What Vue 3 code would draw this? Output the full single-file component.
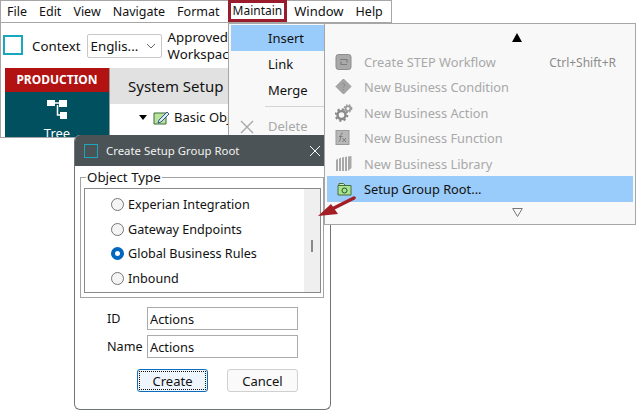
<script setup>
const menus = ['File', 'Edit', 'View', 'Navigate', 'Format', 'Maintain', 'Window', 'Help']
const radios = [
  { label: 'Experian Integration', on: false },
  { label: 'Gateway Endpoints', on: false },
  { label: 'Global Business Rules', on: true },
  { label: 'Inbound', on: false }
]
const subItems = [
  { label: 'Create STEP Workflow', key: 'Ctrl+Shift+R', icon: 'flow' },
  { label: 'New Business Condition', icon: 'cond' },
  { label: 'New Business Action', icon: 'gear' },
  { label: 'New Business Function', icon: 'fx' },
  { label: 'New Business Library', icon: 'lib' }
]
</script>

<template>
  <div class="stage">
    <section class="main-window">
      <nav class="menubar">
        <span v-for="m in menus" :key="m" class="menu-title" :class="{ active: m === 'Maintain', wide: m === 'Window' }">{{ m }}</span>
      </nav>
      <div class="toolbar">
        <span class="logo-box"></span>
        <span class="ctx">Context</span>
        <span class="combo">
          <span>Englis...</span>
          <svg width="10" height="6" viewBox="0 0 10 6"><path d="M1 1l4 4 4-4" fill="none" stroke="#666" /></svg>
        </span>
        <span class="approved">Approved<br />Workspace</span>
      </div>
      <div class="body">
        <aside class="side">
          <div class="prod">PRODUCTION</div>
          <div class="tree-tab">
            <svg width="20" height="19" viewBox="0 0 20 19">
              <path d="M0 0h8v6H0zM12 0h8v7h-8zM13 12h7v7h-7z" fill="#fff" />
              <path d="M8 3h4M10.500 5v10h3" fill="none" stroke="#fff" stroke-width="1.500" />
            </svg>
            <span>Tree</span>
          </div>
        </aside>
        <div class="content">
          <div class="content-head">System Setup</div>
          <div class="tree-row">
            <span class="caret"></span>
            <svg width="17" height="15" viewBox="0 0 17 15">
              <path d="M1 3h12v11H1z" fill="#b9e39b" stroke="#3d6b3a" />
              <path d="M6 10l8-8 2 2-8 8-3 1z" fill="#dfe9f5" stroke="#2d5c8f" />
            </svg>
            <span>Basic Obj</span>
          </div>
        </div>
      </div>
    </section>

    <section class="menu">
      <div class="menu-item hot">Insert</div>
      <div class="menu-item">Link</div>
      <div class="menu-item">Merge</div>
      <div class="sep"></div>
      <div class="menu-item disabled">
        <svg class="x" width="14" height="14" viewBox="0 0 14 14"><path d="M1 1l12 12M13 1L1 13" stroke="#a8a8a8" stroke-width="1.400" fill="none" /></svg>
        Delete
      </div>
    </section>

    <section class="dialog">
      <header class="dlg-title">
        <span class="dlg-logo"></span>
        <span class="dlg-text">Create Setup Group Root</span>
      </header>
      <svg class="dlg-close" width="10" height="10" viewBox="0 0 10 10"><path d="M0 0l10 10M10 0L0 10" stroke="#fff" fill="none" /></svg>
      <div class="dlg-body">
        <fieldset class="group">
          <legend>Object Type</legend>
          <div class="list">
            <div class="radios">
              <label v-for="r in radios" :key="r.label" class="radio-row">
                <span class="radio" :class="{ on: r.on }"></span>
                <span>{{ r.label }}</span>
              </label>
            </div>
            <div class="scrollbar"><span class="thumb"></span></div>
          </div>
        </fieldset>
        <div class="field"><span class="f-label">ID</span><input class="f-input" value="Actions" /></div>
        <div class="field"><span class="f-label">Name</span><input class="f-input" value="Actions" /></div>
        <div class="buttons">
          <button class="btn default"><span>Create</span></button>
          <button class="btn">Cancel</button>
        </div>
      </div>
    </section>

    <section class="submenu">
      <div class="scroll-up"><svg width="10" height="9" viewBox="0 0 10 9"><path d="M5 0l5 9H0z" fill="#000" /></svg></div>
      <div v-for="s in subItems" :key="s.label" class="sub-item">
        <span class="sub-icon">
          <svg width="18" height="18" viewBox="0 0 18 18">
            <template v-if="s.icon === 'flow'">
              <rect x="1" y="1.500" width="15" height="15" rx="2.500" fill="#a9a9a9" stroke="#8c8c8c" />
              <path d="M5 6.500h7v3M12 11.500H6v-3" fill="none" stroke="#7c7c7c" stroke-width="1.200" />
            </template>
            <template v-else-if="s.icon === 'cond'">
              <path d="M8.500 1L16 8.500 8.500 16 1 8.500z" fill="#a6a6a6" stroke="#989898" />
              <path d="M6.800 6.500c1-1.700 3.400-.9 3.200.6-.2 1-1.500 1-1.500 2.300M8.500 11v1.200" fill="none" stroke="#8a8a8a" />
            </template>
            <template v-else-if="s.icon === 'gear'">
              <circle cx="6.500" cy="11" r="4" fill="none" stroke="#8a8a8a" stroke-width="2.500" />
              <circle cx="6.500" cy="11" r="5.800" fill="none" stroke="#8a8a8a" stroke-width="2" stroke-dasharray="2.200 2.300" />
              <circle cx="13" cy="4.500" r="2.400" fill="none" stroke="#9a9a9a" stroke-width="1.800" />
              <circle cx="13" cy="4.500" r="3.700" fill="none" stroke="#9a9a9a" stroke-width="1.400" stroke-dasharray="1.500 1.500" />
            </template>
            <template v-else-if="s.icon === 'fx'">
              <rect x="1" y="1.500" width="13" height="14" fill="#b8b8b8" stroke="#9a9a9a" />
              <path d="M8 4.500c-2-1-2 1-2.500 3L5 11.500c-.3 1-1 1-1.500.7M4 7.500h3.500M7.500 9l3.500 4M11 9l-3.500 4" fill="none" stroke="#7c7c7c" />
            </template>
            <template v-else>
              <path d="M1 5l2-1.500V16H1zM4 3.500L6 2.500V16H4zM7 2.500L9 2v14H7zM10 2l2-.5V16h-2zM13 1.500L16.500 1v12L13 16z" fill="#a8a8a8" />
            </template>
          </svg>
        </span>
        <span class="sub-label">{{ s.label }}</span>
        <span v-if="s.key" class="sub-key">{{ s.key }}</span>
      </div>
      <div class="sub-item hot">
        <span class="sub-icon">
          <svg width="15" height="14" viewBox="0 0 15 14">
            <path d="M1 3.500h13v9.500H1z" fill="#a6e58f" stroke="#4c6b3e" />
            <path d="M2 3V1.500h4.500L8 3" fill="#c8f0b6" stroke="#4c6b3e" />
            <circle cx="7.500" cy="8.500" r="2.500" fill="none" stroke="#2f5228" />
          </svg>
        </span>
        <span class="sub-label">Setup Group Root...</span>
      </div>
      <div class="scroll-down"><svg width="11" height="9" viewBox="0 0 11 9"><path d="M.7.500h9.600L5.500 8.500z" fill="none" stroke="#777" /></svg></div>
    </section>

    <svg class="arrow" width="40" height="26" viewBox="0 0 40 26">
      <path d="M14 15L36 4" stroke="#a31f25" stroke-width="3.500" fill="none" stroke-linecap="round" />
      <path d="M0 22l13-12 7 10z" fill="#a31f25" />
    </svg>
  </div>
</template>

<style>
html, body { margin: 0; background: #fff; }
</style>

<style scoped>
.stage {
  position: relative;
  width: 636px;
  height: 410px;
  overflow: hidden;
  background: #fff;
  font-family: "Noto Sans", "Open Sans", sans-serif;
  font-size: 13px;
  color: #111;
}
.main-window {
  position: absolute;
  left: 0;
  top: 0;
  width: 392px;
  height: 138px;
  box-sizing: border-box;
  border: 1px solid #a6a6a6;
  background: #fff;
  display: flex;
  flex-direction: column;
}
.menubar {
  height: 22px;
  flex: none;
  box-sizing: border-box;
  display: flex;
  align-items: center;
  border-bottom: 1px solid #a6a6a6;
  font-size: 12.500px;
}
.menu-title {
  padding: 0 6px;
  line-height: 19px;
}
.menu-title.wide { font-size: 13px; }
.menu-title.active {
  border: 3px solid #9a1b2c;
  box-sizing: border-box;
  padding: 0 2px;
  margin: -1px 1px 0 2px;
  height: 22px;
  line-height: 16px;
  font-size: 12px;
}
.toolbar {
  height: 45px;
  flex: none;
  display: flex;
  align-items: center;
  padding-left: 2px;
  font-size: 13.300px;
}
.logo-box {
  width: 16px;
  height: 16px;
  border: 2px solid #19a7bd;
  margin: -2px 9px 0 0;
}
.ctx { margin-right: 6px; }
.combo {
  width: 75px;
  height: 24px;
  box-sizing: border-box;
  border: 1px solid #c8c8c8;
  border-radius: 2px;
  padding: 0 5px 0 3px;
  display: flex;
  align-items: center;
  justify-content: space-between;
  margin-right: 6px;
  white-space: nowrap;
}
.approved { line-height: 17px; white-space: nowrap; }
.body {
  flex: 1;
  display: flex;
  padding-left: 4px;
  min-height: 0;
  overflow: hidden;
}
.side {
  width: 104px;
  flex: none;
  background: #00505f;
  color: #fff;
  display: flex;
  flex-direction: column;
  border-right: 1px solid #999;
}
.prod {
  height: 24px;
  background: #b31212;
  font-weight: 700;
  font-size: 12px;
  line-height: 24px;
  text-align: center;
}
.tree-tab {
  display: flex;
  flex-direction: column;
  align-items: center;
  padding-top: 8px;
  gap: 5px;
}
.content { flex: 1; min-width: 0; }
.content-head {
  height: 36px;
  background: #e1e1e1;
  font-size: 15px;
  line-height: 36px;
  padding-left: 18px;
}
.tree-row {
  display: flex;
  align-items: center;
  gap: 4px;
  padding: 4px 0 0 29px;
  white-space: nowrap;
}
.caret {
  width: 0;
  height: 0;
  border-left: 4.500px solid transparent;
  border-right: 4.500px solid transparent;
  border-top: 5px solid #000;
  margin-right: 2px;
}
.menu {
  position: absolute;
  left: 228px;
  top: 23px;
  width: 97px;
  height: 125px;
  box-sizing: border-box;
  border: 1px solid #a6a6a6;
  background: #f8f8f8;
  padding: 1px 0 0 2px;
}
.menu-item {
  height: 26px;
  line-height: 27px;
  padding-left: 37px;
  position: relative;
}
.menu-item.hot { background: #99ccfa; }
.menu-item.disabled { color: #a8a8a8; }
.x { position: absolute; left: 9px; top: 7px; }
.sep {
  height: 1px;
  background: #d4d4d4;
  margin: 3px 0 6px 34px;
}
.submenu {
  position: absolute;
  left: 324px;
  top: 23px;
  width: 312px;
  height: 202px;
  box-sizing: border-box;
  border: 1px solid #a6a6a6;
  background: #f8f8f8;
  padding: 2px;
  display: flex;
  flex-direction: column;
  font-size: 12.800px;
}
.scroll-up, .scroll-down {
  display: flex;
  align-items: center;
  padding-left: 185px;
  flex: none;
}
.scroll-up { height: 23.400px; }
.scroll-down { height: 21px; }
.sub-item {
  height: 25.400px;
  display: flex;
  align-items: center;
  color: #a8a8a8;
  padding-left: 8px;
  white-space: nowrap;
  flex: none;
}
.sub-item.hot { background: #99ccfa; color: #111; height: 26px; }
.sub-icon { width: 29px; flex: none; display: flex; align-items: center; }
.sub-item.hot .sub-icon { padding-left: 2px; width: 27px; }
.sub-label { flex: 1; }
.sub-key { font-size: 12px; color: #8c8c8c; margin-right: 17px; }
.dialog {
  position: absolute;
  left: 74px;
  top: 135px;
  width: 257px;
  height: 275px;
  box-sizing: border-box;
  border: 1px solid #6f7477;
  border-top: 0;
  border-radius: 6px;
  background: #fff;
  overflow: hidden;
  display: flex;
  flex-direction: column;
}
.dlg-title {
  height: 31px;
  flex: none;
  background: #4c5356;
  color: #f2f2f2;
  display: flex;
  align-items: center;
  padding: 0 0 0 9px;
}
.dlg-logo {
  width: 12px;
  height: 12px;
  border: 1px solid #19a7bd;
  margin-right: 8px;
}
.dlg-text { font-size: 11.400px; }
.dlg-close { position: absolute; left: 235px; top: 11px; }
.dlg-body { padding: 0 6px 0 5px; flex: 1; }
.group {
  margin: 3px 0 0;
  padding: 0 2px 2px 3px;
  border: 1px solid #a3a3a3;
  height: 129px;
  box-sizing: border-box;
}
.group legend {
  padding: 0 1px;
  margin-left: 2px;
  line-height: 17px;
  font-size: 13.300px;
}
.list {
  height: 105px;
  box-sizing: border-box;
  border: 1px solid #8a8a8a;
  display: flex;
  margin-top: 2px;
}
.radios { flex: 1; padding: 3px 0 0 26px; font-size: 12.600px; }
.radio-row {
  display: flex;
  align-items: center;
  gap: 4px;
  height: 24.800px;
  white-space: nowrap;
}
.radio {
  width: 13px;
  height: 13px;
  box-sizing: border-box;
  border: 1px solid #767676;
  border-radius: 50%;
  background: #f4f4f4;
}
.radio.on {
  border: 4px solid #0067c0;
  background: #fff;
}
.scrollbar {
  width: 16px;
  background: #efefef;
  position: relative;
}
.thumb {
  position: absolute;
  left: 7px;
  top: 51px;
  width: 2px;
  height: 12px;
  background: #8a8a8a;
}
.field {
  display: flex;
  align-items: center;
  margin-top: 5px;
  padding-left: 27px;
  height: 23px;
  font-size: 12.600px;
}
.dlg-body .group + .field { margin-top: 9px; }
.f-label { width: 40px; flex: none; white-space: nowrap; }
.f-input {
  width: 151px;
  height: 23px;
  box-sizing: border-box;
  border: 1px solid #ababab;
  padding: 0 2px;
  font: inherit;
  font-size: 12.800px;
  color: #111;
  outline: none;
}
.buttons {
  display: flex;
  padding-left: 57px;
  gap: 19px;
  margin-top: 11px;
}
.btn {
  width: 71px;
  height: 23px;
  box-sizing: border-box;
  border: 1px solid #d0d0d0;
  border-radius: 3px;
  background: #fafafa;
  font: inherit;
  color: #111;
  padding: 0;
}
.btn.default {
  border: 1px solid #0f6cbd;
  background: #eef5fc;
  padding: 1px;
}
.btn.default span {
  display: block;
  height: 100%;
  line-height: 18px;
  border: 1px dotted #111;
  box-sizing: border-box;
}
.arrow {
  position: absolute;
  left: 318px;
  top: 194px;
}
</style>
